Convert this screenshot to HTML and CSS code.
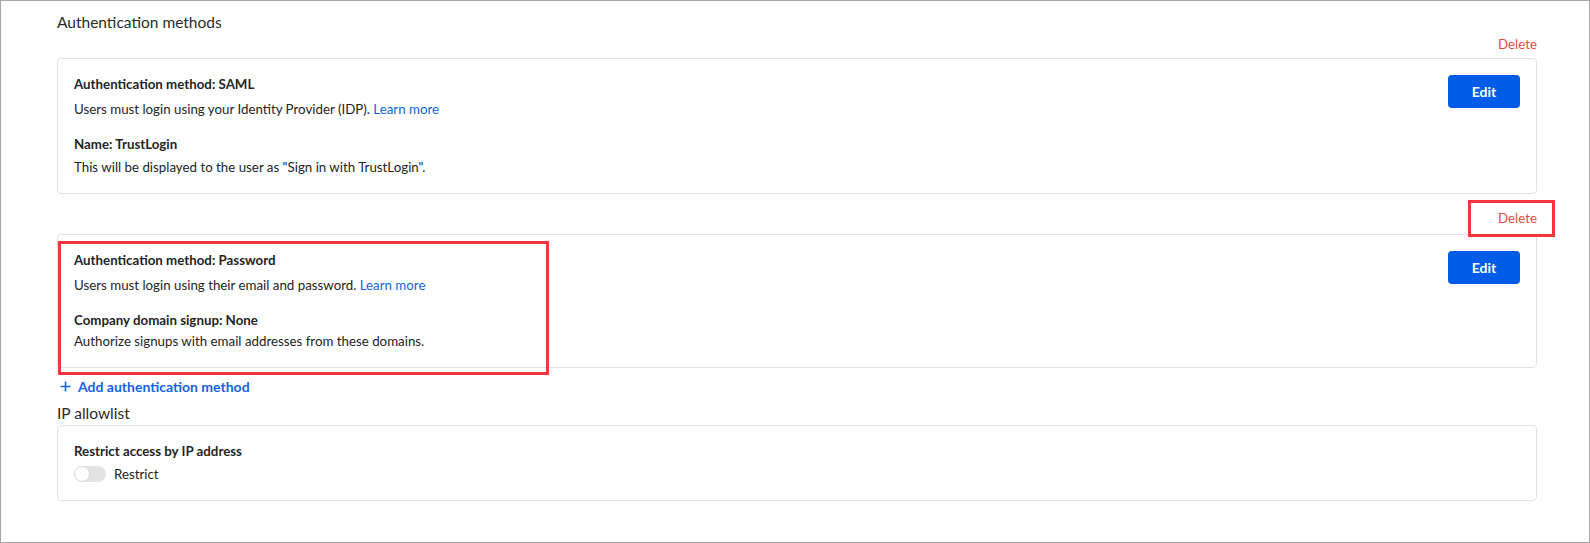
FILE: index.html
```html
<!DOCTYPE html>
<html lang="en">
<head>
    <meta charset="UTF-8">
    <meta name="viewport" content="width=device-width, initial-scale=1.0">
    <title>Security settings</title>
    <link rel="stylesheet" href="styles.css">
</head>
<body>
    <div class="frame">
        <!-- Authentication methods -->
        <h2 class="section-title">Authentication methods</h2>

        <div class="method">
            <div class="method-actions">
                <a href="#" class="delete-link">Delete</a>
            </div>
            <div class="card">
                <div class="card-body">
                    <div class="field-title">Authentication method: SAML</div>
                    <p class="field-desc">Users must login using your Identity Provider (IDP). <a href="#" class="link">Learn more</a></p>
                    <div class="field-title spaced">Name: TrustLogin</div>
                    <p class="field-desc tight">This will be displayed to the user as "Sign in with TrustLogin".</p>
                </div>
                <button class="btn-edit">Edit</button>
            </div>
        </div>

        <div class="method second">
            <div class="method-actions">
                <a href="#" class="delete-link marked">Delete</a>
            </div>
            <div class="card">
                <div class="card-body marked-body">
                    <div class="field-title">Authentication method: Password</div>
                    <p class="field-desc">Users must login using their email and password. <a href="#" class="link">Learn more</a></p>
                    <div class="field-title spaced">Company domain signup: None</div>
                    <p class="field-desc tight">Authorize signups with email addresses from these domains.</p>
                </div>
                <button class="btn-edit">Edit</button>
            </div>
        </div>

        <a href="#" class="add-method">
            <svg width="11" height="11" viewBox="0 0 11 11"><path d="M5.5 0.5v10M0.5 5.5h10" stroke="currentColor" stroke-width="1.6" fill="none"/></svg>
            <span>Add authentication method</span>
        </a>

        <!-- IP allowlist -->
        <h2 class="section-title small-gap">IP allowlist</h2>
        <div class="card">
            <div class="card-body">
                <div class="field-title">Restrict access by IP address</div>
                <label class="toggle-row">
                    <span class="toggle"><span class="knob"></span></span>
                    <span>Restrict</span>
                </label>
            </div>
        </div>
    </div>
</body>
</html>
```

FILE: styles.css
```css
/* Page */
body {
    margin: 0;
    font-family: Lato, "Noto Sans", sans-serif;
    color: #242424;
    background: #fff;
}

.frame {
    box-sizing: border-box;
    height: 543px;
    border: 1px solid #a6a6a6;
    padding: 9px 52px 0 56px;
}

/* Section headings */
.section-title {
    margin: 0;
    font-size: 15.5px;
    font-weight: 400;
    line-height: 24px;
    color: #2b2b2b;
}

.section-title.small-gap {
    margin-top: 5px;
}

/* Auth method blocks */
.method-actions {
    display: flex;
    justify-content: flex-end;
    height: 20px;
    line-height: 20px;
    margin-bottom: 4px;
}

.method.second {
    margin-top: 14px;
}

.method.second .method-actions {
    margin-bottom: 6px;
}

.delete-link {
    color: #e24c3b;
    font-size: 13.3px;
    text-decoration: none;
    position: relative;
}

/* red annotation boxes */
.delete-link.marked::after {
    content: "";
    position: absolute;
    left: -30px;
    right: -18px;
    top: -8px;
    bottom: -9px;
    border: 3px solid #f0383c;
}

.marked-body {
    position: relative;
}

.marked-body::after {
    content: "";
    position: absolute;
    left: -16px;
    top: -10px;
    width: 485px;
    bottom: -24px;
    border: 3px solid #f0383c;
}

/* Cards */
.card {
    display: flex;
    justify-content: space-between;
    align-items: flex-start;
    border: 1px solid #e2e2e2;
    border-radius: 4px;
    padding: 16px;
}

.field-title {
    font-size: 13.3px;
    font-weight: 700;
    line-height: 18px;
}

.field-title.spaced {
    margin-top: 16px;
}

.field-desc {
    margin: 6px 0 0;
    font-size: 13.3px;
    line-height: 20px;
}

.field-desc.tight {
    margin-top: 4px;
}

.method.second .field-desc.tight {
    margin-top: 2px;
}

.link {
    color: #1463e0;
    text-decoration: none;
}

.btn-edit {
    width: 72px;
    height: 33px;
    border: none;
    border-radius: 4px;
    background: #005be6;
    color: #fff;
    font-family: inherit;
    font-size: 14px;
    font-weight: 700;
    cursor: pointer;
}

/* Add method link */
.add-method {
    display: flex;
    align-items: center;
    gap: 7px;
    margin-top: 8px;
    padding-left: 3px;
    height: 20px;
    color: #1463e0;
    font-size: 14px;
    font-weight: 700;
    text-decoration: none;
}

/* Toggle */
.toggle-row {
    display: flex;
    align-items: center;
    gap: 8px;
    margin-top: 4px;
    height: 20px;
    font-size: 13.3px;
}

.toggle {
    width: 32px;
    height: 16px;
    border-radius: 8px;
    background: #e3e3e3;
    position: relative;
}

.knob {
    position: absolute;
    left: 0;
    top: 0;
    width: 14px;
    height: 14px;
    border-radius: 50%;
    background: #fff;
    border: 1px solid #dcdcdc;
}
```
